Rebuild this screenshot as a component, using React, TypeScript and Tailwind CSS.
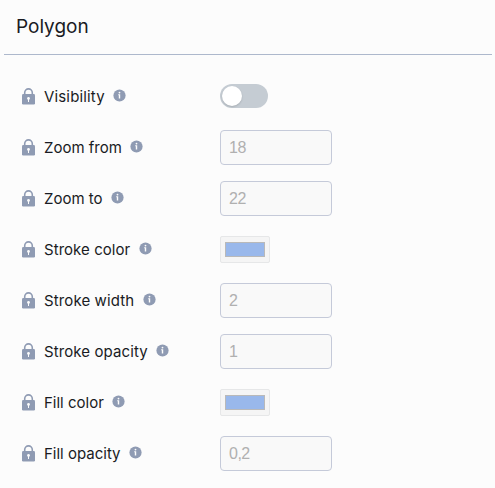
import React from "react";

type Row = { label: string; kind: "toggle" | "text" | "color"; value?: string; labelClass: string };

const rows: Row[] = [
  { label: "Visibility", kind: "toggle", labelClass: "w-[60px] tracking-[0.15px]" },
  { label: "Zoom from", kind: "text", value: "18", labelClass: "w-[77px]" },
  { label: "Zoom to", kind: "text", value: "22", labelClass: "w-[58px]" },
  { label: "Stroke color", kind: "color", labelClass: "w-[86px] tracking-[0.05px]" },
  { label: "Stroke width", kind: "text", value: "2", labelClass: "w-[90px] tracking-[0.12px]" },
  { label: "Stroke opacity", kind: "text", value: "1", labelClass: "w-[103px] tracking-[0.1px]" },
  { label: "Fill color", kind: "color", labelClass: "w-[59px]" },
  { label: "Fill opacity", kind: "text", value: "0,2", labelClass: "w-[76px]" },
];

function LockIcon() {
  return (
    <svg className="mr-[9px] h-[17px] w-[13px] shrink-0" viewBox="0 0 13 17" fill="none">
      <path d="M2.7 7.5V4.7a3.8 3.8 0 0 1 7.6 0v2.8" stroke="#8f9bb3" strokeWidth="1.6" />
      <rect y="6.1" width="13" height="10.5" rx="1.3" fill="#8f9bb3" />
      <circle cx="6.5" cy="10.4" r="1.4" fill="#fcfcfc" />
      <path d="M6 11h1v3H6z" fill="#fcfcfc" />
    </svg>
  );
}

function InfoIcon() {
  return (
    <svg className="mb-[2px] ml-[9px] h-[13px] w-[13px] shrink-0" viewBox="0 0 13 13">
      <circle cx="6.5" cy="6.5" r="6.1" fill="#8f9bb3" />
      <circle cx="6.5" cy="3.6" r="0.9" fill="#fcfcfc" />
      <path d="M5.2 5.3h2v4.3H5.8V6.2h-.6z" fill="#fcfcfc" />
    </svg>
  );
}

function Control({ row }: { row: Row }) {
  if (row.kind === "toggle") {
    return (
      <div className="mb-px flex h-6 w-12 items-center rounded-full bg-[#c5ccd3] px-[2px]">
        <div className="h-5 w-5 rounded-full bg-white shadow-[0_1px_2px_rgba(0,0,0,0.15)]" />
      </div>
    );
  }
  if (row.kind === "color") {
    return (
      <div className="h-[27px] w-[50px] rounded-[2px] border border-[#e6e7e8] bg-[#f5f5f5] px-1 py-[5px]">
        <div className="h-[15px] w-10 border border-[#b9b9b9] bg-[#99b8eb]" />
      </div>
    );
  }
  return (
    <input
      disabled
      defaultValue={row.value}
      className="h-[35px] w-28 rounded-[4px] border border-[#c5cad9] bg-[#f9f9f9] px-2 font-['Liberation_Sans',Arial,sans-serif] text-base tracking-[-0.5px] text-[#b0b0b0]"
    />
  );
}

export default function App() {
  return (
    <div className="h-[488px] w-full bg-[#fcfcfc] font-['Inter',sans-serif] text-[#191b23]">
      <header className="ml-1 mr-[3px] flex h-[55px] items-center border-b border-[#adb8cc] pl-3">
        <h2 className="text-[19px] leading-6">Polygon</h2>
      </header>
      <div className="pt-4">
        {rows.map((row) => (
          <div key={row.label} className="flex h-[51px] items-center pl-[22px]">
            <div className="flex w-[198px] items-center">
              <LockIcon />
              <span className={`whitespace-nowrap text-[15px] leading-5 ${row.labelClass}`}>{row.label}</span>
              <InfoIcon />
            </div>
            <Control row={row} />
          </div>
        ))}
      </div>
    </div>
  );
}
